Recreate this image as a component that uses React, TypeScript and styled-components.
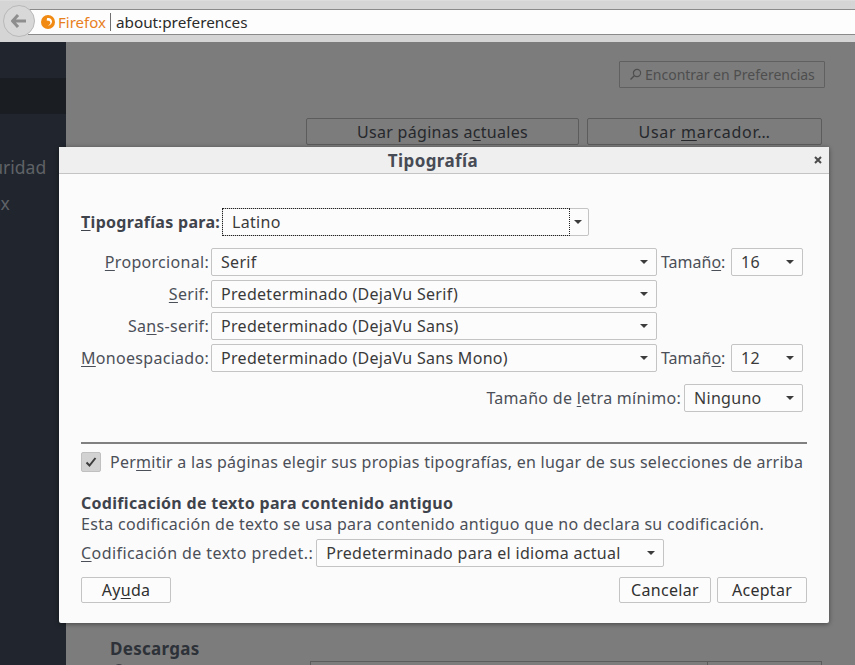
import styled, { createGlobalStyle } from "styled-components";

const GlobalStyle = createGlobalStyle`
    html, body {
        margin: 0;
        padding: 0;
        width: 855px;
        height: 665px;
        overflow: hidden;
        font-family: "Noto Sans", "Open Sans", sans-serif;
    }
    * { box-sizing: border-box; }
`;

const Page = styled.div`
    position: relative;
    width: 855px;
    height: 665px;
    display: flex;
    flex-direction: column;
    overflow: hidden;
    font-size: 16px;
`;

const Toolbar = styled.header`
    height: 42px;
    flex: none;
    background: #d5d5d5;
    border-top: 1px solid #dcdcdc;
    padding-top: 8px;
    position: relative;
`;

const UrlBar = styled.div`
    height: 26px;
    margin-left: 28px;
    background: #fdfdfd;
    border-top: 1px solid #8a8a8a;
    border-bottom: 1px solid #8a8a8a;
    display: flex;
    align-items: center;
    padding-left: 13px;
`;

const BackButton = styled.div`
    position: absolute;
    left: 3px;
    top: 4px;
    width: 32px;
    height: 32px;
    border-radius: 50%;
    border: 1px solid #b9b9b9;
    background: #d8d8d8;
    display: flex;
    align-items: center;
    justify-content: center;
`;

const Identity = styled.span`
    display: flex;
    align-items: center;
    gap: 3px;
    color: #e8801c;
    font-size: 15px;
    height: 18px;
    padding-right: 4px;
    border-right: 1px solid #707070;
`;

const Address = styled.span`
    margin-left: 5px;
    color: #2b2b2b;
    font-size: 15.3px;
`;

const Behind = styled.div`
    flex: 1;
    display: flex;
    min-height: 0;
`;

const Sidebar = styled.nav`
    width: 66px;
    flex: none;
    background: #21262e;
    padding-top: 36px;
    overflow: hidden;
    color: #5f6266;
    font-size: 17.5px;
`;

const SideSelected = styled.div`
    height: 36px;
    background: #1a1e22;
    margin-bottom: 35px;
`;

const SideItem = styled.div<{ $shift: number }>`
    height: 36px;
    display: flex;
    align-items: center;
    white-space: nowrap;
    margin-left: ${p => p.$shift}px;
`;

const Content = styled.main`
    flex: 1;
    background: #7c7c7c;
    color: #26282c;
    display: flex;
    flex-direction: column;
`;

const SearchRow = styled.div`
    display: flex;
    justify-content: flex-end;
    padding: 19px 30px 0 0;
`;

const SearchBox = styled.div`
    width: 206px;
    height: 27px;
    border: 1px solid #606060;
    border-radius: 1px;
    display: flex;
    align-items: center;
    gap: 3px;
    padding-left: 9px;
    color: #4e4e4e;
    font-size: 14px;
    white-space: nowrap;
`;

const HomeButtons = styled.div`
    display: flex;
    gap: 8px;
    padding: 30px 0 0 240px;
`;

const HomeButton = styled.div<{ $width: number; $spacing: number }>`
    width: ${p => p.$width}px;
    height: 27px;
    border: 1px solid #5c5c5c;
    border-radius: 2px;
    display: flex;
    align-items: center;
    justify-content: center;
    letter-spacing: ${p => p.$spacing}px;
`;

const Downloads = styled.div`
    display: flex;
    flex-direction: column;
    margin-top: 493px;
    padding-left: 44px;
`;

const DownloadsTitle = styled.div`
    font-weight: 700;
    font-size: 17px;
    letter-spacing: 0.3px;
    line-height: 22px;
    color: #2d3138;
    flex: none;
`;

const DownloadsRow = styled.div`
    display: flex;
    align-items: flex-start;
    margin-top: 1px;
`;

const Radio = styled.span`
    width: 12px;
    height: 12px;
    flex: none;
    margin: 3px 0 0 3px;
    border: 1px solid #3e4046;
    border-radius: 50%;
`;

const DownloadsField = styled.div`
    display: flex;
    margin-left: 185px;
    width: 512px;
    height: 26px;
    border: 1px solid #5c5c5c;
`;

const DownloadsBrowse = styled.div`
    margin-left: auto;
    width: 114px;
    border-left: 1px solid #5c5c5c;
`;

const Dialog = styled.section`
    position: absolute;
    left: 59px;
    top: 147px;
    width: 770px;
    height: 476px;
    background: #fbfbfb;
    border-radius: 2px;
    box-shadow: 0 1px 5px rgba(0, 0, 0, 0.45);
    display: flex;
    flex-direction: column;
    color: #4b4f58;
    letter-spacing: 0.3px;
`;

const TitleBar = styled.div`
    height: 27px;
    flex: none;
    background: #efefef;
    border-bottom: 1px solid #c4c4c4;
    display: flex;
    align-items: center;
    justify-content: center;
    position: relative;
    padding-right: 22px;
    font-weight: 700;
    font-size: 17px;
    letter-spacing: 0.4px;
    color: #474b55;
`;

const Close = styled.span`
    position: absolute;
    right: 7px;
    top: 9px;
    display: flex;
`;

const Body = styled.div`
    flex: 1;
    padding: 34px 22px 20px;
    display: flex;
    flex-direction: column;
`;

const TopRow = styled.div`
    display: flex;
    align-items: center;
    height: 28px;
    gap: 2px;
`;

const StrongLabel = styled.label`
    font-weight: 700;
    color: #3f434c;
    width: 139px;
    white-space: nowrap;
`;

const TopSelect = styled.div`
    width: 367px;
    height: 28px;
    border: 1px solid #c4c4c4;
    border-radius: 2px;
    background: #fcfcfc;
    display: flex;
    color: #3a3a3a;
`;

const FocusArea = styled.div`
    flex: 1;
    margin: -1px 0 -1px -1px;
    border: 1px dotted #222;
    display: flex;
    align-items: center;
    padding-left: 9px;
`;

const ArrowArea = styled.div`
    width: 18px;
    display: flex;
    align-items: center;
    justify-content: center;
    padding-right: 3px;
`;

const FontGrid = styled.div`
    display: grid;
    grid-template-columns: 130px 446px 74px 72px;
    grid-auto-rows: 28px;
    row-gap: 4px;
    margin-top: 12px;
    align-items: center;
`;

const FieldLabel = styled.label`
    text-align: right;
    padding-right: 2px;
    white-space: nowrap;
`;

const Select = styled.div<{ $width?: number }>`
    width: ${p => (p.$width ? `${p.$width}px` : "100%")};
    height: 28px;
    flex: none;
    border: 1px solid #c4c4c4;
    border-radius: 2px;
    background: #fcfcfc;
    display: flex;
    align-items: center;
    justify-content: space-between;
    padding: 0 8px 0 9px;
    color: #3a3a3a;
    white-space: nowrap;
`;

const SizeCell = styled.div`
    grid-column: 3 / 4;
    text-align: left;
    padding-left: 4px;
    white-space: nowrap;
    letter-spacing: 0;
`;

const MinRow = styled.div`
    display: flex;
    justify-content: flex-end;
    align-items: center;
    gap: 3px;
    margin-top: 12px;
    padding-right: 4px;
`;

const Separator = styled.hr`
    height: 2px;
    border: none;
    background: #808080;
    margin: 30px 0 0;
`;

const CheckRow = styled.div`
    display: flex;
    align-items: center;
    gap: 9px;
    margin-top: 7px;
    white-space: nowrap;
    letter-spacing: 0.255px;
`;

const CheckBox = styled.span`
    width: 20px;
    height: 20px;
    flex: none;
    background: #d2d2d2;
    border: 1px solid #c0c0c0;
    border-radius: 2px;
    display: flex;
    align-items: center;
    justify-content: center;
`;

const SectionTitle = styled.div`
    font-weight: 700;
    color: #3f434c;
    line-height: 21px;
    margin-top: 20px;
`;

const SectionText = styled.div`
    line-height: 21px;
`;

const EncodingRow = styled.div`
    display: flex;
    align-items: center;
    gap: 3px;
    margin-top: 4px;
`;

const EncodingLabel = styled.label`
    letter-spacing: 0.42px;
    white-space: nowrap;
`;

const Actions = styled.div`
    display: flex;
    margin-top: 10px;
    gap: 6px;
`;

const Button = styled.button<{ $width: number; $pushed?: boolean }>`
    width: ${p => p.$width}px;
    height: 26px;
    border: 1px solid #c4c4c4;
    border-radius: 2px;
    background: #fcfcfc;
    color: #303030;
    font: inherit;
    letter-spacing: inherit;
    padding: 0;
    margin-left: ${p => (p.$pushed ? "auto" : "0")};
`;

const Key = styled.span`
    text-decoration: underline;
    text-underline-offset: 2px;
`;

function Arrow() {
    return <svg width="8" height="4" viewBox="0 0 8 4">
        <path d="M0 0h8L4 4z" fill="#3c3c3c" />
    </svg>;
}

function FirefoxLogo() {
    return <svg width="14" height="14" viewBox="0 0 14 14">
        <circle cx="7" cy="7" r="7" fill="#f08a12" />
        <path d="M6 3.2c2.6-.9 5 .8 5 3.4 0 2.5-2 4.2-4.4 3.9 2-.4 3-1.7 2.7-3.2-.2-1-1-1.6-2-1.5l-1.6-.4z" fill="#fff" />
    </svg>;
}

function App() {
    return <Page>
        <GlobalStyle />
        <Toolbar>
            <UrlBar>
                <Identity><FirefoxLogo />Firefox</Identity>
                <Address>about:preferences</Address>
            </UrlBar>
            <BackButton>
                <svg width="16" height="14" viewBox="0 0 16 14">
                    <path d="M7 1L1.5 7 7 13M2 7h13" fill="none" stroke="#8e8e8e" strokeWidth="3" />
                </svg>
            </BackButton>
        </Toolbar>
        <Behind>
            <Sidebar>
                <SideSelected />
                <SideItem $shift={-38}>Seguridad</SideItem>
                <SideItem $shift={-46}>Firefox</SideItem>
            </Sidebar>
            <Content>
                <SearchRow>
                    <SearchBox>
                        <svg width="13" height="13" viewBox="0 0 13 13">
                            <circle cx="8" cy="5" r="3.6" fill="none" stroke="#4e4e4e" strokeWidth="1.2" />
                            <path d="M5.3 7.7L1.5 11.5" stroke="#4e4e4e" strokeWidth="1.4" />
                        </svg>
                        Encontrar en Preferencias
                    </SearchBox>
                </SearchRow>
                <HomeButtons>
                    <HomeButton $width={273} $spacing={0.3}><span>Usar páginas a<Key>c</Key>tuales</span></HomeButton>
                    <HomeButton $width={235} $spacing={0.7}><span>Usar <Key>m</Key>arcador…</span></HomeButton>
                </HomeButtons>
                <Downloads>
                    <DownloadsTitle>Descargas</DownloadsTitle>
                    <DownloadsRow>
                        <Radio />
                        <DownloadsField><DownloadsBrowse /></DownloadsField>
                    </DownloadsRow>
                </Downloads>
            </Content>
        </Behind>
        <Dialog>
            <TitleBar>
                Tipografía
                <Close>
                    <svg width="8" height="8" viewBox="0 0 8 8">
                        <path d="M1 1l6 6M7 1L1 7" stroke="#4a4a4a" strokeWidth="2" />
                    </svg>
                </Close>
            </TitleBar>
            <Body>
                <TopRow>
                    <StrongLabel><Key>T</Key>ipografías para:</StrongLabel>
                    <TopSelect>
                        <FocusArea>Latino</FocusArea>
                        <ArrowArea><Arrow /></ArrowArea>
                    </TopSelect>
                </TopRow>
                <FontGrid>
                    <FieldLabel><Key>P</Key>roporcional:</FieldLabel>
                    <Select>Serif<Arrow /></Select>
                    <SizeCell>Tamañ<Key>o</Key>:</SizeCell>
                    <Select>16<Arrow /></Select>

                    <FieldLabel><Key>S</Key>erif:</FieldLabel>
                    <Select>Predeterminado (DejaVu Serif)<Arrow /></Select>
                    <span />
                    <span />

                    <FieldLabel>Sa<Key>n</Key>s-serif:</FieldLabel>
                    <Select>Predeterminado (DejaVu Sans)<Arrow /></Select>
                    <span />
                    <span />

                    <FieldLabel><Key>M</Key>onoespaciado:</FieldLabel>
                    <Select>Predeterminado (DejaVu Sans Mono)<Arrow /></Select>
                    <SizeCell>Tamañ<Key>o</Key>:</SizeCell>
                    <Select>12<Arrow /></Select>
                </FontGrid>
                <MinRow>
                    <span>Tamaño de <Key>l</Key>etra mínimo:</span>
                    <Select $width={119}>Ninguno<Arrow /></Select>
                </MinRow>
                <Separator />
                <CheckRow>
                    <CheckBox>
                        <svg width="12" height="10" viewBox="0 0 12 10">
                            <path d="M1.5 5.5L4.5 8.5 10.5 1" fill="none" stroke="#3c3c3c" strokeWidth="2" />
                        </svg>
                    </CheckBox>
                    <span>Per<Key>m</Key>itir a las páginas elegir sus propias tipografías, en lugar de sus selecciones de arriba</span>
                </CheckRow>
                <SectionTitle>Codificación de texto para contenido antiguo</SectionTitle>
                <SectionText>Esta codificación de texto se usa para contenido antiguo que no declara su codificación.</SectionText>
                <EncodingRow>
                    <EncodingLabel><Key>C</Key>odificación de texto predet.:</EncodingLabel>
                    <Select $width={348}>Predeterminado para el idioma actual<Arrow /></Select>
                </EncodingRow>
                <Actions>
                    <Button $width={90}>Ay<Key>u</Key>da</Button>
                    <Button $width={92} $pushed>Cancelar</Button>
                    <Button $width={90}>Aceptar</Button>
                </Actions>
            </Body>
        </Dialog>
    </Page>;
}

export default App;
